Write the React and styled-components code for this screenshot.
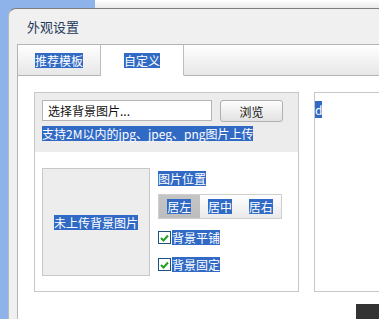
import styled, { createGlobalStyle } from 'styled-components';

const GlobalStyle = createGlobalStyle`
	html, body {
		margin: 0;
		padding: 0;
		width: 379px;
		height: 319px;
		overflow: hidden;
		background: #8db3ea;
		font-family: "Noto Sans CJK SC", "DejaVu Sans", sans-serif;
	}
	#root {
		height: 319px;
	}
`

const TopStrip = styled.div`
	height: 8px;
	margin-left: 95px;
	background: linear-gradient(#ffffff, #e9e9e9);
`

const Window = styled.div`
	margin-left: 8px;
	height: 311px;
	background: #f0f0f0;
	border-top: 1px solid #7d7d7d;
	border-left: 1px solid #b9b9b9;
	border-top-left-radius: 8px;
	box-sizing: border-box;
	display: flex;
	flex-direction: column;
`

const TitleBar = styled.div`
	height: 35px;
	padding-left: 18px;
	display: flex;
	align-items: center;
	font-size: 13px;
	color: #1e395b;
	flex-shrink: 0;
`

const Body = styled.div`
	flex: 1;
	margin-left: 8px;
	border-top: 1px solid #b4b4b4;
	border-left: 1px solid #b4b4b4;
	background: #fff;
	display: flex;
	flex-direction: column;
`

const TabBar = styled.div`
	height: 31px;
	display: flex;
	flex-shrink: 0;
	background: linear-gradient(#ffffff, #e6e6e6);
`

const Tab = styled.div`
	width: 82px;
	display: flex;
	align-items: center;
	justify-content: center;
	font-size: 12px;
	border-right: 1px solid #bdbdbd;
	border-bottom: 1px solid ${p => p.$active ? 'transparent' : '#b4b4b4'};
	background: ${p => p.$active ? '#fff' : 'transparent'};
`

const TabRest = styled.div`
	flex: 1;
	border-bottom: 1px solid #b4b4b4;
`

const Sel = styled.span`
	background: #316ac5;
	color: #fff;
	line-height: 15px;
	font-size: ${p => p.$size || 12}px;
`

const Panels = styled.div`
	display: flex;
	gap: 15px;
	padding: 16px 0 0 16px;
`

const LeftPanel = styled.div`
	width: 265px;
	height: 200px;
	border: 1px solid #c8c8c8;
	box-sizing: border-box;
	display: flex;
	flex-direction: column;
`

const UploadArea = styled.div`
	background: #ececec;
	padding: 7px 0 0 7px;
	height: 59px;
	box-sizing: border-box;
`

const InputRow = styled.div`
	display: flex;
	gap: 8px;
	margin-bottom: 4px;
`

const FileInput = styled.div`
	width: 170px;
	height: 21px;
	box-sizing: border-box;
	border: 1px solid #b5b5b5;
	background: #fff;
	font-size: 12px;
	padding-left: 5px;
	display: flex;
	align-items: center;
	color: #111;
`

const Button = styled.div`
	width: 63px;
	height: 22px;
	box-sizing: border-box;
	border: 1px solid #b0b0b0;
	border-radius: 3px;
	background: linear-gradient(#fdfdfd, #e2e2e2);
	font-size: 12px;
	display: flex;
	align-items: center;
	justify-content: center;
	color: #111;
`

const Hint = styled.div`
	height: 15px;
	display: flex;
	align-items: center;
`

const SettingsArea = styled.div`
	display: flex;
	gap: 8px;
	padding: 16px 0 0 7px;
`

const Preview = styled.div`
	width: 108px;
	height: 108px;
	box-sizing: border-box;
	border: 1px solid #c8c8c8;
	background: #ededed;
	display: flex;
	align-items: center;
	justify-content: center;
`

const Options = styled.div`
	display: flex;
	flex-direction: column;
	padding-top: 3px;
`

const Segmented = styled.div`
	display: flex;
	margin-top: 8px;
	margin-bottom: 11px;
	border: 1px solid #cfcfcf;
	width: 124px;
	height: 25px;
	box-sizing: border-box;
`

const Segment = styled.div`
	flex: 1;
	display: flex;
	align-items: center;
	justify-content: center;
	background: ${p => p.$active ? 'linear-gradient(#c4c4c4, #bdbdbd)' : 'linear-gradient(#ffffff, #e9e9e9)'};
`

const Check = styled.label`
	display: flex;
	align-items: center;
	height: 15px;
	margin-bottom: 12px;
`

const Box = styled.span`
	width: 11px;
	height: 11px;
	border: 1px solid #1c5180;
	background: #fff;
	display: flex;
	align-items: center;
	justify-content: center;
	margin-right: 1px;
`

const RightPanel = styled.div`
	flex: 1;
	height: 200px;
	border: 1px solid #c8c8c8;
	border-right: none;
	box-sizing: border-box;
	padding: 3px 0 0 0;
`

const Footer = styled.div`
	display: flex;
	justify-content: flex-end;
	margin-top: 12px;
`

const DarkButton = styled.div`
	width: 23px;
	height: 15px;
	background: #333;
`

const CheckMark = () => (
	<svg width="9" height="8" viewBox="0 0 9 8">
		<path d="M1 4 L3.5 6.5 L8 1.5" stroke="#21a121" strokeWidth="2" fill="none" />
	</svg>
)

const App = () => {
	return (
		<>
			<GlobalStyle />
			<TopStrip />
			<Window>
				<TitleBar>外观设置</TitleBar>
				<Body>
					<TabBar>
						<Tab><Sel>推荐模板</Sel></Tab>
						<Tab $active><Sel>自定义</Sel></Tab>
						<TabRest />
					</TabBar>
					<Panels>
						<LeftPanel>
							<UploadArea>
								<InputRow>
									<FileInput>选择背景图片...</FileInput>
									<Button>浏览</Button>
								</InputRow>
								<Hint><Sel>支持2M以内的jpg、jpeg、png图片上传</Sel></Hint>
							</UploadArea>
							<SettingsArea>
								<Preview><Sel>未上传背景图片</Sel></Preview>
								<Options>
									<Sel style={{ alignSelf: 'flex-start' }}>图片位置</Sel>
									<Segmented>
										<Segment $active><Sel>居左</Sel></Segment>
										<Segment><Sel>居中</Sel></Segment>
										<Segment><Sel>居右</Sel></Segment>
									</Segmented>
									<Check><Box><CheckMark /></Box><Sel>背景平铺</Sel></Check>
									<Check><Box><CheckMark /></Box><Sel>背景固定</Sel></Check>
								</Options>
							</SettingsArea>
						</LeftPanel>
						<RightPanel><Sel>d</Sel></RightPanel>
					</Panels>
					<Footer><DarkButton /></Footer>
				</Body>
			</Window>
		</>
	)
}

export default App;
